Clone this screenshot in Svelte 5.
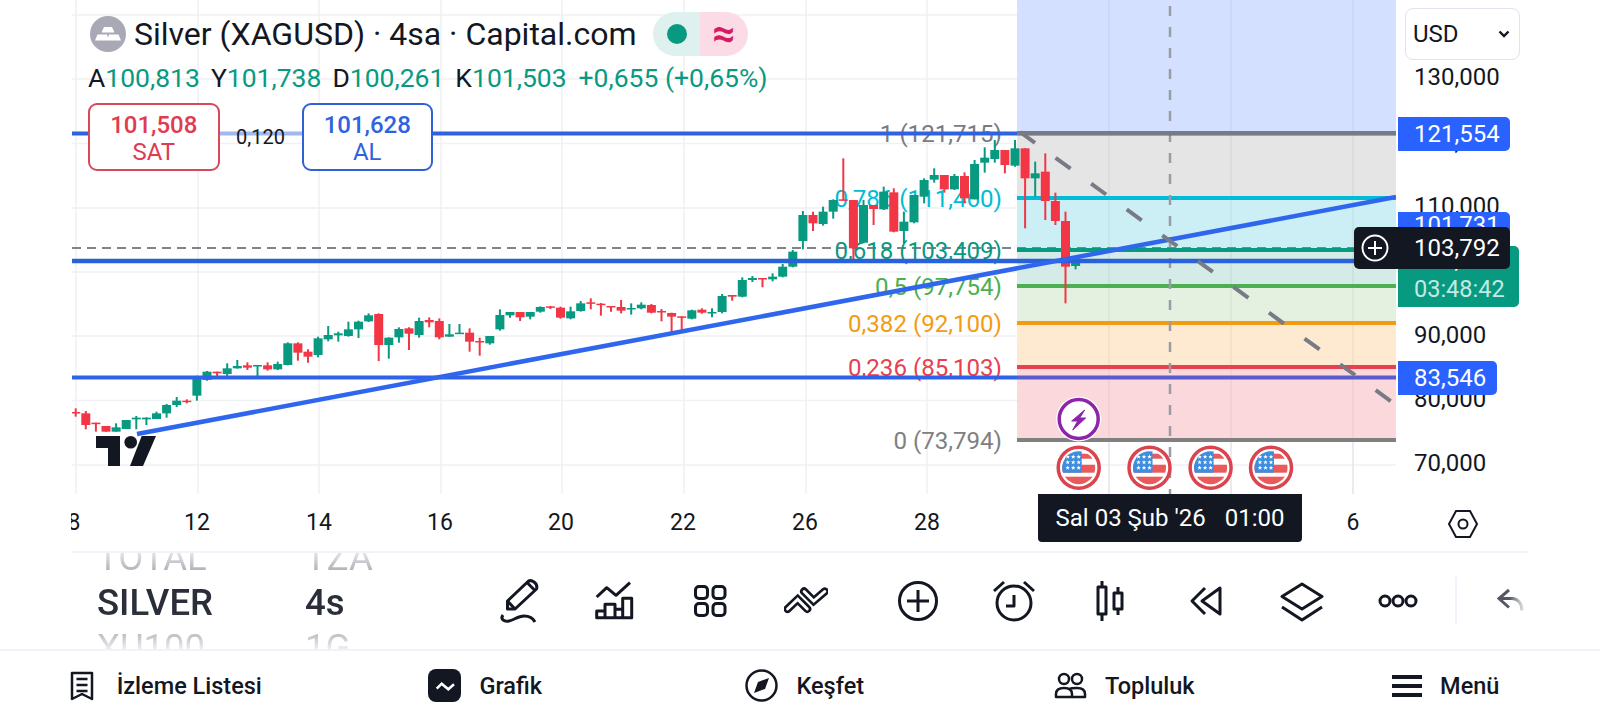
<script>
  const UP = '#089981', DOWN = '#F23645';
  function from6(i, c, a, b, h, l){ return {x: 75.7 + i*10.1, t: 280+a/3, b: 280+b/3, h: 280+h/3, l: 280+l/3, c}; }
  function from7(i, c, a, b, h, l){ return {x: 75.7 + i*10.1, t: 260+a/3, b: 260+b/3, h: 260+h/3, l: 260+l/3, c}; }
  function from8(i, c, a, b, h, l){ return {x: 75.7 + i*10.1, t: 140+a/3, b: 140+b/3, h: 140+h/3, l: 140+l/3, c}; }
  const R = DOWN, G = UP;
  const d6 = [[R,396,400,385,410],[R,400,435,393,448],[R,428,432,428,455],[R,438,455,438,455],[G,442,455,430,455],[G,420,447,420,447],[G,413,418,408,448],[G,413,418,412,435],[G,400,417,395,417],[G,375,400,372,413],[G,362,375,351,381],[R,362,366,358,370],[G,297,347,287,362],[G,275,300,273,302],[R,275,280,275,293],[G,265,282,250,290],[G,258,265,240,266],[R,256,263,247,270],[G,255,258,255,290],[R,256,268,247,272],[G,252,268,245,270],[G,190,255,187,256],[R,190,218,187,242],[R,215,230,208,248],[G,175,225,170,232],[G,165,178,138,184],[G,160,166,155,185],[G,148,168,125,170],[G,125,148,122,174],[G,106,124,100,126],[R,102,195,100,243],[G,173,195,172,236],[G,147,172,142,188],[R,145,161,142,210],[G,123,165,113,173],[R,120,127,112,142],[R,123,172,115,178],[G,163,170,132,170],[G,158,161,132,161]];
  const d7 = [[R,218,245,205,275],[R,243,246,233,287],[G,228,250,228,254],[G,165,208,148,212],[G,156,166,156,173],[R,156,172,156,183],[G,156,170,156,178],[G,141,155,139,158],[R,139,142,138,147],[R,143,173,140,176],[G,154,175,140,178],[G,130,153,123,155],[R,127,130,115,148],[R,131,133,129,167],[R,138,141,138,155],[R,141,152,120,160],[G,144,148,130,164],[G,134,145,127,148],[R,135,158,132,160],[R,153,157,147,184],[R,159,170,158,222],[R,169,172,169,210],[G,151,176,149,178],[R,149,158,145,161],[G,156,158,145,172],[G,108,156,102,160],[R,105,110,105,122],[G,60,110,52,112],[G,54,60,48,66],[R,54,57,54,82],[G,50,58,40,64]];
  const d8 = [[G,380,410,372,412],[G,335,380,330,382],[G,225,303,213,328],[R,225,250,215,273],[G,215,252,200,257],[G,180,215,178,236],[R,178,182,55,182],[R,180,325,180,358],[G,195,308,180,310],[R,195,207,195,255],[G,155,208,140,210],[R,157,275,145,277],[G,245,273,215,310],[G,165,247,165,250],[G,120,170,115,190],[G,105,119,85,128],[R,105,148,105,158],[G,108,148,102,150],[R,108,175,97,190],[G,72,178,60,178],[G,53,68,22,98],[G,30,57,0,68],[R,30,75,30,100],[G,25,77,0,80],[R,25,115,25,265],[G,100,115,65,170],[R,95,183,40,240],[R,183,243,158,255],[R,243,380,215,490],[G,368,378,365,388]];
  const candles = [
    ...d6.map((r,i)=>from6(i,...r)),
    ...d7.map((r,i)=>from7(i+39,...r)),
    ...d8.map((r,i)=>from8(i+70,...r)),
  ];
  const gridX = [76, 198, 319, 441, 562, 684, 806, 927, 1109, 1231, 1353];
  const gridY = [15, 79, 143.5, 208, 272, 336, 400.5, 465];
  const zones = [
    {y:0, h:133, c:'#d0deff'},
    {y:133, h:65, c:'#e3e3e4'},
    {y:198, h:52, c:'#c8eef4'},
    {y:250, h:36, c:'#d2e9e6'},
    {y:286, h:37, c:'#e2f0de'},
    {y:323, h:44, c:'#fde8cc'},
    {y:367, h:73, c:'#fbd5d9'},
  ];
  const levels = [
    {y:133, c:'#787b86', t:'1 (121,715)'},
    {y:198, c:'#00bcd4', t:'0,786 (111,460)'},
    {y:250, c:'#089981', t:'0,618 (103,409)'},
    {y:286, c:'#4caf50', t:'0,5 (97,754)'},
    {y:323, c:'#f39c12', t:'0,382 (92,100)'},
    {y:367, c:'#e8404f', t:'0,236 (85,103)'},
    {y:440, c:'#808080', t:'0 (73,794)'},
  ];
  const axis = [['130,000',76],['120,000',141],['110,000',205],['90,000',334],['80,000',398],['70,000',462]];
  const times = [['8',74],['12',197],['14',319],['16',440],['20',561],['22',683],['26',805],['28',927],['6',1353]];
  const flags = [1078.7, 1149.5, 1210.6, 1271];
  const picker = [['TOTAL','TZA'],['SILVER','4s'],['XU100','1G']];
  const nav = ['İzleme Listesi','Grafik','Keşfet','Topluluk','Menü'];
  const star = (x,y) => `M${x} ${y-2.2}l.6 1.5 1.6.1-1.2 1 .4 1.6-1.4-.9-1.4.9.4-1.6-1.2-1 1.600-.1z`;
</script>

<div class="page">
  <section class="chart">
    <svg class="canvas" width="1600" height="551" viewBox="0 0 1600 551">
      <defs>
        <clipPath id="plot"><rect x="72" y="0" width="1324" height="494"/></clipPath>
        <clipPath id="flagclip"><circle cx="0" cy="0" r="16.500"/></clipPath>
      </defs>
      <g clip-path="url(#plot)">
        {#each gridX as x}<line x1={x} x2={x} y1="0" y2="494" stroke="#f0f1f4" stroke-width="1.5"/>{/each}
        {#each gridY as y}<line x1="72" x2="1396" y1={y} y2={y} stroke="#f0f1f4" stroke-width="1.5"/>{/each}
        {#each zones as z}<rect x="1017" y={z.y} width="379" height={z.h} fill={z.c} opacity="0.93"/>{/each}
        {#each gridX.slice(8) as x}<line x1={x} x2={x} y1="0" y2="494" stroke="#000" stroke-opacity="0.05" stroke-width="1.5"/>{/each}
        <line x1="72" x2="1360" y1="248" y2="248" stroke="#80838c" stroke-width="2" stroke-dasharray="9 6"/>
        {#each levels as l}
          <text class="fib" x="1002" y={l.y + 9} fill={l.c} text-anchor="end">{l.t}</text>
          <line x1="1017" x2="1396" y1={l.y} y2={l.y} stroke={l.c} stroke-width="4"/>
        {/each}
        {#each candles as k}
          <line x1={k.x} x2={k.x} y1={k.h} y2={k.l} stroke={k.c} stroke-width="2"/>
          <rect x={k.x-4.5} y={k.t} width="9" height={Math.max(1.5,k.b-k.t)} fill={k.c}/>
        {/each}
        <line x1="1170" x2="1170" y1="6" y2="494" stroke="#9a9ca3" stroke-width="2.5" stroke-dasharray="10 11"/>
        <line x1="72" x2="1396" y1="133.5" y2="133.5" stroke="#2e62e0" stroke-width="4"/>
        <line x1="72" x2="1396" y1="261" y2="261" stroke="#2962d8" stroke-width="4.5"/>
        <line x1="72" x2="1017" y1="377.5" y2="377.5" stroke="#2e62e8" stroke-width="4"/>
        <line x1="1017" x2="1396" y1="377.5" y2="377.5" stroke="#5a5ccb" stroke-width="4"/>
        <line x1="1017" x2="1396" y1="133" y2="133" stroke="#787b86" stroke-width="4"/>
        <line x1="137" x2="1396" y1="434" y2="197" stroke="#2f66ee" stroke-width="4.5"/>
        <line x1="1020" x2="1392" y1="132" y2="402" stroke="#787b86" stroke-width="4" stroke-dasharray="18.500 25.450"/>
        <g class="tv">
          <path d="M96 436h24v30h-12v-18H96z"/>
          <circle cx="130.7" cy="442.3" r="6.3"/>
          <path d="M141.7 436H156l-13 30h-13z"/>
        </g>
        {#each flags as x}
          <g transform="translate({x} 467.7)">
            <circle r="20.5" fill="#fff" stroke="#d9444f" stroke-width="3.5"/>
            <g clip-path="url(#flagclip)">
              <rect x="-17" y="-17" width="34" height="34" fill="#fff"/>
              <rect x="-17" y="-14" width="34" height="5" fill="#ea5a5a"/>
              <rect x="-17" y="-3" width="34" height="8" fill="#ea5a5a"/>
              <rect x="-17" y="9" width="34" height="9" fill="#ea5a5a"/>
              <rect x="-17" y="-17" width="20" height="22" fill="#3d8ee0"/>
              <g fill="#fff">
                {#each [-11,-5.500,0] as sy}{#each [-11,-5.500,0] as sx}<path d={star(sx,sy)}/>{/each}{/each}
              </g>
            </g>
          </g>
        {/each}
        <g transform="translate(1078.7 419)">
          <circle r="22.500" fill="#fff"/>
          <circle r="19.500" fill="#fff" stroke="#8e24aa" stroke-width="3.500"/>
          <path d="M6 -9 L-7 2 L-1 2 L-6 11 L7 -1 L1 -1 Z" fill="#8e24aa" stroke="#8e24aa" stroke-width="1" stroke-linejoin="round"/>
        </g>
      </g>
      <path class="spreadline" d="M219 133.5H302"/>
    </svg>

    <header class="legend">
      <div class="title">
        <svg class="logo" width="36" height="36" viewBox="0 0 36 36">
          <circle cx="18" cy="18" r="18" fill="#a9a9b5"/>
          <path d="M14 11h8l2.500 5.500h-13zM7.500 18.500h9.500l2 6H5zM19 18.500h9.500l2.500 6H17z" fill="#fff"/>
        </svg>
        <span class="name">Silver (XAGUSD) · 4sa · Capital.com</span>
        <div class="pill">
          <span class="pill-l"><i></i></span>
          <span class="pill-r">≈</span>
        </div>
      </div>
      <div class="ohlc">
        <span><b>A</b>100,813</span><span><b>Y</b>101,738</span><span><b>D</b>100,261</span><span><b>K</b>101,503</span><span class="chg">+0,655 (+0,65%)</span>
      </div>
      <div class="trade">
        <button class="sell"><strong>101,508</strong><em>SAT</em></button>
        <span class="spread">0,120</span>
        <button class="buy"><strong>101,628</strong><em>AL</em></button>
      </div>
    </header>

    <div class="usd">USD
      <svg width="12" height="8" viewBox="0 0 12 8"><path d="M1.500 1.500L6 6l4.500-4.500" fill="none" stroke="#131722" stroke-width="2.400"/></svg>
    </div>

    {#each axis as a}<span class="ax" style="top:{a[1]-13}px">{a[0]}</span>{/each}
    <div class="tag blue t1">121,554</div>
    <div class="tag blue t2">101,731</div>
    <div class="tag blue t3">83,546</div>
    <div class="tag green"><span>101,503</span><span class="count">03:48:42</span></div>
    <div class="tag cross">
      <svg width="28" height="28" viewBox="0 0 28 28"><circle cx="14" cy="14" r="12.500" fill="none" stroke="#fff" stroke-width="2"/><path d="M14 7v14M7 14h14" stroke="#fff" stroke-width="2"/></svg>
      <span>103,792</span>
    </div>

    <div class="timeaxis">
      {#each times as t}<span class="tm" style="left:{t[1]-30-71}px">{t[0]}</span>{/each}
    </div>
    <div class="tip"><span>Sal 03 Şub '26</span><span>01:00</span></div>
    <svg class="hex" width="32" height="34" viewBox="0 0 32 34"><path d="M9 4h14l7 13-7 13H9L2 17z" fill="none" stroke="#131722" stroke-width="2"/><circle cx="16" cy="17" r="4.500" fill="none" stroke="#131722" stroke-width="2"/></svg>
  </section>

  <section class="toolbar">
    <div class="wheel">
      {#each picker as p, i}
        <div class="row" class:on={i===1}><span>{p[0]}</span><span>{p[1]}</span></div>
      {/each}
    </div>
    <div class="tools">
      <svg viewBox="0 0 44 44"><g transform="translate(2 0)"><path d="M9.500 30V22L30 2.500c2-1.500 4-1 6 .5s3.500 4 2.500 7L17 30z" class="s"/><path d="M9.500 22l7.500 8M29 3.500l8 8" class="s"/><path d="M5 36C2 40 6 43 11 42C16 41 20 37 26 37C31 37 35 39 37 43" class="s"/></g></svg>
      <svg viewBox="0 0 44 44"><path d="M4.700 18l10-9.300L24 16.300 38 3.700" class="s"/><path d="M4.700 38.700V32H13v6.700zM13 38.700V25.300h10v13.400zM23 38.700V30.300h7.700v8.400zM30.700 38.700V19.300h9v19.400z" class="s"/></svg>
      <svg viewBox="0 0 44 44"><rect x="7.500" y="7.500" width="12" height="12" rx="3.500" class="s"/><rect x="25" y="7.500" width="12" height="12" rx="3.500" class="s"/><rect x="7.500" y="24.500" width="12" height="12" rx="3.500" class="s"/><rect x="25" y="24.500" width="12" height="12" rx="3.500" class="s"/></svg>
      <svg viewBox="0 0 46 44" class="wide"><g fill="none" stroke-linecap="round" stroke-linejoin="miter"><path d="M3.700 30.300L14.300 20.300 24.300 30.300M21 12L31 22 42.700 12" stroke="#131722" stroke-width="8.500"/><path d="M3.700 30.300L14.300 20.300 24.300 30.300M21 12L31 22 42.700 12" stroke="#fff" stroke-width="3"/></g></svg>
      <svg viewBox="0 0 44 44"><circle cx="22" cy="22" r="18.500" class="s"/><path d="M22 11v22M11 22h22" class="s"/></svg>
      <svg viewBox="0 0 44 44"><circle cx="22" cy="24" r="17" class="s"/><path d="M22 16v11h-8" class="s"/><path d="M2 12L12 3M42 12L32 3" class="s"/></svg>
      <svg viewBox="0 0 44 44"><rect x="10" y="8" width="8" height="27" class="s"/><path d="M14 2v6M14 35v7" class="s"/><rect x="26" y="14" width="8" height="16" class="s"/><path d="M30 8v6M30 30v6" class="s"/></svg>
      <svg viewBox="0 0 44 44"><path d="M21 9L8 22l13 13" class="s"/><path d="M36 9L18 22l18 13z" class="s"/></svg>
      <svg viewBox="0 0 44 44"><path d="M22 5L42 17.500 22 30 2 17.500z" class="s"/><path d="M2 28l20 13 20-13" class="s"/></svg>
      <svg viewBox="0 0 44 44"><circle cx="9" cy="22" r="5" class="s"/><circle cx="22" cy="22" r="5" class="s"/><circle cx="35" cy="22" r="5" class="s"/></svg>
    </div>
    <span class="sep"></span>
    <svg class="undo" viewBox="0 0 28 26">
      <defs><linearGradient id="undofade" x1="0" x2="1" y1="0" y2="0"><stop offset=".45" stop-color="#555862"/><stop offset="1" stop-color="#d6d7db"/></linearGradient></defs>
      <path d="M12 2L2 10.500l10 9M3 10.500h12c6 0 10 5 10 12" fill="none" stroke="url(#undofade)" stroke-width="3"/>
    </svg>
  </section>

  <nav class="nav">
    {#each nav as n, i}
      <div class="item" class:last={i===4}>
        {#if i===0}
          <svg class="first" width="24" height="30" viewBox="0 0 24 30"><path d="M2 2h20v26l-10-5-10 5z" class="n"/><path d="M6.500 8h11M6.500 14h11M6.500 20h11" class="n"/></svg>
        {:else if i===1}
          <svg width="33" height="33" viewBox="0 0 33 33"><rect width="33" height="33" rx="8" fill="#131722"/><path d="M8.700 19.700l5-5 6.600 5.600 5.700-5" fill="none" stroke="#fff" stroke-width="2.500"/></svg>
        {:else if i===2}
          <svg width="33" height="33" viewBox="0 0 33 33"><circle cx="16.500" cy="16.500" r="15" class="n"/><path d="M24 9l-4 11-11 4 4-11z" fill="#131722"/></svg>
        {:else if i===3}
          <svg width="33" height="27" viewBox="0 0 33 27"><circle cx="10" cy="7" r="5" class="n"/><circle cx="23" cy="7" r="5" class="n"/><path d="M2 25v-3c0-4 3-6 8-6s8 2 8 6v3z" class="n"/><path d="M15 17c2-1 5-1 8-1 5 0 8 2 8 6v3H18" class="n"/></svg>
        {:else}
          <svg width="30" height="24" viewBox="0 0 30 24"><path d="M0 3h30M0 12h30M0 21h30" fill="none" stroke="#131722" stroke-width="4"/></svg>
        {/if}
        <span>{n}</span>
      </div>
    {/each}
  </nav>
</div>

<style>
  :global(body) { margin: 0; background: #fff; }
  .page { width: 1600px; height: 720px; overflow: hidden; display: flex; flex-direction: column; font-family: Roboto, "Liberation Sans", sans-serif; color: #131722; background: #fff; }

  .chart { position: relative; height: 551px; flex: none; overflow: hidden; }
  .canvas { position: absolute; inset: 0; }
  .fib { font: 400 24.100px Roboto, sans-serif; }
  .spreadline { stroke: rgba(255,255,255,.55); stroke-width: 5; fill: none; }
  .tv { fill: #131722; }

  .legend { position: absolute; left: 88px; top: 12px; display: flex; flex-direction: column; }
  .title { display: flex; align-items: center; height: 44px; }
  .logo { margin: 0 8px 0 2px; }
  .name { font-size: 32px; margin-right: 16px; white-space: nowrap; }
  .pill { display: flex; width: 95px; height: 44px; border-radius: 22px; overflow: hidden; }
  .pill-l { flex: 1; background: #dff1ee; display: flex; align-items: center; justify-content: center; }
  .pill-l i { width: 20px; height: 20px; border-radius: 50%; background: #089981; margin-left: 2px; }
  .pill-r { flex: 1; background: #fbdbe5; color: #d81b60; font-size: 40px; font-weight: 700; display: flex; align-items: center; justify-content: center; line-height: 44px; }
  .ohlc { display: flex; margin-top: 5px; height: 32px; align-items: center; font-size: 26.500px; color: #089981; white-space: nowrap; }
  .ohlc span { margin-right: 11px; }
  .ohlc b { font-weight: 400; color: #131722; }
  .ohlc .chg { margin-left: 1px; }
  .trade { display: flex; align-items: center; margin-top: 10px; }
  .trade button { width: 131.500px; height: 68px; box-sizing: border-box; border-radius: 9px; background: #fff; border: 2px solid; display: flex; flex-direction: column; align-items: center; justify-content: center; font-family: inherit; padding: 0; }
  .trade strong { font-size: 24px; font-weight: 500; line-height: 29px; }
  .trade em { font-size: 24px; font-style: normal; line-height: 24px; }
  .sell { border-color: #d9475a !important; color: #e03c50; }
  .buy { border-color: #2f62d8 !important; color: #2f62e0; }
  .spread { width: 82px; text-align: center; font-size: 20px; }

  .usd { position: absolute; left: 1405px; top: 8px; width: 115px; height: 52px; box-sizing: border-box; border: 1.5px solid #e0e3eb; border-radius: 8px; display: flex; align-items: center; justify-content: space-between; padding: 0 9px 0 7px; font-size: 24px; }

  .ax { position: absolute; left: 1414px; font-size: 24px; line-height: 28px; color: #131722; }
  .tag { position: absolute; left: 1398px; box-sizing: border-box; color: #fff; font-size: 24px; border-radius: 0 5px 5px 0; padding-left: 16px; display: flex; align-items: center; }
  .blue { background: #2962ff; }
  .t1 { top: 117px; width: 112px; height: 34px; }
  .t2 { top: 212px; width: 112px; height: 34px; align-items: flex-start; line-height: 26px; }
  .t3 { top: 361px; width: 99px; height: 34px; }
  .green { top: 246px; width: 121px; height: 61px; background: #089981; flex-direction: column; align-items: flex-start; justify-content: space-between; padding-bottom: 4px; }
  .count { color: #c5e9e2; font-size: 23.500px; }
  .cross { left: 1354px; top: 227px; width: 156px; height: 42px; background: #131722; border-radius: 5px; padding-left: 7px; gap: 25px; }

  .timeaxis { position: absolute; left: 71px; top: 0; width: 1340px; height: 551px; overflow: hidden; pointer-events: none; }
  .tm { position: absolute; top: 509px; width: 60px; text-align: center; font-size: 23px; line-height: 28px; }
  .tip { position: absolute; left: 1038px; top: 494px; width: 264px; height: 48px; box-sizing: border-box; background: #131722; border-radius: 0 0 4px 4px; color: #fff; font-size: 24px; display: flex; align-items: center; justify-content: center; gap: 19px; }
  .hex { position: absolute; left: 1447px; top: 507px; }

  .toolbar { position: relative; flex: none; height: 98px; margin-left: 72px; width: 1456px; box-sizing: border-box; border-top: 2px solid #f0f3fa; display: flex; align-items: center; }
  .wheel { width: 400px; height: 96px; overflow: hidden; display: flex; flex-direction: column; justify-content: center; padding-left: 25px; padding-top: 2px; box-sizing: border-box; flex: none; mask-image: linear-gradient(#0003 0, #000 38%, #000 62%, #0002 100%); -webkit-mask-image: linear-gradient(#0003 0, #000 38%, #000 62%, #0002 100%); }
  .row { display: flex; flex: none; height: 45px; align-items: center; font-size: 36.500px; color: #787b86; font-weight: 400; }
  .row span:first-child { width: 208px; }
  .row.on { color: #2a2e39; font-weight: 500; }
  .tools { display: flex; align-items: center; gap: 52px; margin-left: 24px; flex: none; }
  .tools svg { width: 44px; height: 44px; flex: none; }
  .tools .wide { margin-right: 16px; }
  .s { fill: none; stroke: #131722; stroke-width: 3; stroke-linejoin: round; }
  .sep { width: 2px; height: 48px; background: #f0f3fa; margin-left: 35px; flex: none; }
  .undo { width: 28px; height: 26px; margin-left: 40px; flex: none; }

  .nav { flex: 1; display: grid; grid-template-columns: repeat(5, 319.500px); padding-left: 6px; border-top: 2px solid #f0f3fa; align-items: center; }
  .item { display: flex; align-items: center; justify-content: center; gap: 18px; font-size: 23.500px; font-weight: 500; color: #131722; }
  .item.last { padding-left: 4px; }
  .first { margin-right: 5px; }
  .n { fill: none; stroke: #131722; stroke-width: 2.500; stroke-linejoin: round; }
</style>
